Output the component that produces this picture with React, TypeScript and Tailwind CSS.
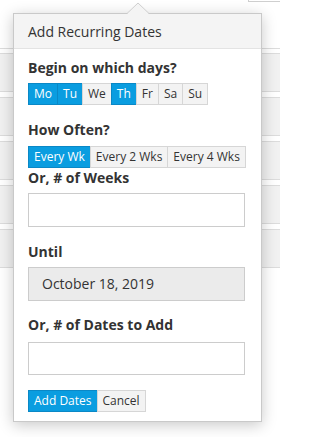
const days = [
  { label: "Mo", on: true },
  { label: "Tu", on: true },
  { label: "We", on: false },
  { label: "Th", on: true },
  { label: "Fr", on: false },
  { label: "Sa", on: false },
  { label: "Su", on: false },
]

const freqs = [
  { label: "Every Wk", on: true },
  { label: "Every 2 Wks", on: false },
  { label: "Every 4 Wks", on: false },
]

const btnOn = "bg-[#0a9de0] border-[#0a88c6] text-white"
const btnOff = "bg-[#f3f3f3] border-[#d6d6d6] text-[#333]"
const btn = "shrink-0 whitespace-nowrap h-[22px] px-[5px] border text-[12px] leading-[20px] "

const Label = ({ children, className = "" }: { children: string; className?: string }) => (
  <div className={"h-[20px] leading-[20px] text-[14px] font-bold text-[#333] " + className}>{children}</div>
)

export default function App() {
  return (
    <div
      className="relative w-[280px] h-[437px] overflow-hidden bg-white"
      style={{ fontFamily: '"Open Sans", "Noto Sans", sans-serif' }}
    >
      {/* page behind the popover */}
      <div className="absolute left-[248px] top-[-20px] w-[40px] h-[22px] border-l border-b border-[#cfcfcf] bg-white" />
      <div className="pt-[48px]">
        <div className="border-t border-[#dcdcdc]" />
        {[0, 1, 2, 3, 4].map((i) => (
          <div
            key={i}
            className={(i === 0 ? "mt-[4px]" : "mt-[5px]") + " h-[39px] border-y border-[#dcdcdc] bg-[#f1f1f1]"}
          />
        ))}
      </div>

      {/* popover */}
      <div className="absolute left-[13px] top-[13px] w-[249px] border border-[#c9c9c9] bg-white shadow-[0_3px_14px_rgba(0,0,0,0.22)]">
        <svg className="absolute left-[113px] top-[-12px]" width="22" height="12" viewBox="0 0 22 12">
          <polygon points="0,12 11,1 22,12" fill="#f4f4f4" />
          <polyline points="0,11.5 11,1 22,11.5" fill="none" stroke="#cfcfcf" strokeWidth="1" />
        </svg>
        <div className="h-[35px] px-[14px] bg-[#f4f4f4] border-b border-[#e3e3e3] text-[14px] leading-[35px] text-[#333]">
          Add Recurring Dates
        </div>
        <div className="pt-[9px] px-[14px] pb-[9px]">
          <Label>Begin on which days?</Label>
          <div className="mt-[5px] flex">
            {days.map((d) => (
              <span key={d.label} className={btn + "-ml-px first:ml-0 " + (d.on ? btnOn : btnOff)}>
                {d.label}
              </span>
            ))}
          </div>

          <Label className="mt-[15px]">How Often?</Label>
          <div className="mt-[6px] flex">
            {freqs.map((f) => (
              <span key={f.label} className={btn + "-ml-px first:ml-0 " + (f.on ? btnOn : btnOff)}>
                {f.label}
              </span>
            ))}
          </div>

          <Label>Or, # of Weeks</Label>
          <div className="mt-[5px] w-[217px] h-[34px] border border-[#cccccc] bg-white" />

          <Label className="mt-[15px]">Until</Label>
          <div className="mt-[5px] w-[217px] h-[34px] border border-[#cccccc] bg-[#ebebeb] pl-[13px] text-[14px] leading-[32px] text-[#333]">
            October 18, 2019
          </div>

          <Label className="mt-[14px]">Or, # of Dates to Add</Label>
          <div className="mt-[7px] w-[217px] h-[33px] border border-[#cccccc] bg-white" />

          <div className="mt-[15px] flex">
            <span className={btn + btnOn}>Add Dates</span>
            <span className={btn + "-ml-px " + btnOff}>Cancel</span>
          </div>
        </div>
      </div>
    </div>
  )
}
